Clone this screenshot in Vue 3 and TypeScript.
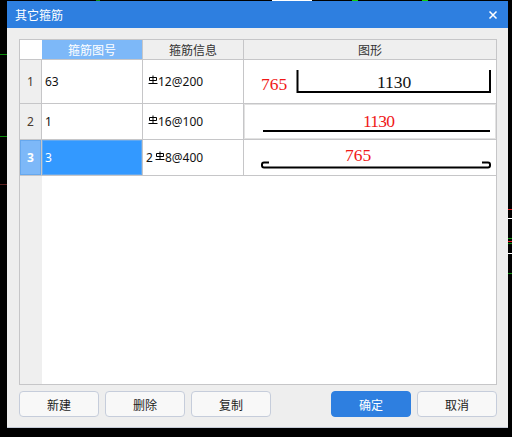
<script setup lang="ts">
interface Row {
  index: number
  no: string
  prefix: string
  info: string
  height: number
  selected: boolean
}

const rows: Row[] = [
  { index: 1, no: '63', prefix: '', info: '12@200', height: 44, selected: false },
  { index: 2, no: '1', prefix: '', info: '16@100', height: 36, selected: false },
  { index: 3, no: '3', prefix: '2', info: '8@400', height: 36, selected: true },
]

const specks = [
  { left: 0, top: 54, width: 7, color: '#0a8a0a' },
  { left: 0, top: 136, width: 7, color: '#0a8a0a' },
  { left: 0, top: 184, width: 7, color: '#5a2020' },
  { left: 508, top: 209, width: 4, color: '#e02020' },
  { left: 508, top: 218, width: 4, color: '#ffffff' },
  { left: 508, top: 238, width: 4, color: '#109010' },
  { left: 508, top: 241, width: 4, color: '#e02020' },
  { left: 508, top: 243, width: 4, color: '#109010' },
  { left: 508, top: 253, width: 4, color: '#ffffff' },
  { left: 508, top: 273, width: 4, color: '#109010' },
  { left: 96, top: 0, width: 4, color: '#109010' },
  { left: 272, top: 0, width: 40, color: '#ffffff' },
  { left: 352, top: 0, width: 6, color: '#10d010' },
  { left: 422, top: 0, width: 6, color: '#10d010' },
]
</script>

<template>
  <div class="screen">
    <i
      v-for="(s, i) in specks"
      :key="i"
      class="speck"
      :style="{ left: s.left + 'px', top: s.top + 'px', width: s.width + 'px', background: s.color }"
    ></i>
    <section class="dialog">
      <header class="title">
        <span>其它箍筋</span>
        <svg class="close" width="10" height="10" viewBox="0 0 10 10">
          <path d="M1.5 1.5 8.5 8.5M8.5 1.5 1.5 8.5" stroke="#fff" stroke-width="1.5" fill="none" />
        </svg>
      </header>
      <div class="body">
        <div class="table">
          <div class="row head">
            <div class="c-idx corner"></div>
            <div class="c-no head-active">箍筋图号</div>
            <div class="c-info head-cell">箍筋信息</div>
            <div class="c-draw head-cell">图形</div>
          </div>
          <div
            v-for="r in rows"
            :key="r.index"
            class="row"
            :class="{ selected: r.selected }"
            :style="{ height: r.height + 'px' }"
          >
            <div class="c-idx idx">{{ r.index }}</div>
            <div class="c-no no">{{ r.no }}</div>
            <div class="c-info info">
              <span v-if="r.prefix" class="prefix">{{ r.prefix }}</span>
              <svg class="bar" width="10" height="10" viewBox="0 0 10 10">
                <path d="M5 .5V8.5M1.5 2.5H8.5V5.5H1.5ZM.5 8.5H9.5" stroke="#000" stroke-width="1" fill="none" />
              </svg>
              <span class="info-text">{{ r.info }}</span>
            </div>
            <div class="c-draw draw" :class="{ framed: r.index === 2 }">
              <svg v-if="r.index === 1" width="252" height="43" viewBox="0 0 252 43">
                <text x="17" y="30" class="dim red">765</text>
                <path d="M53.5 10V32H246V10" class="rebar" />
                <text x="133" y="28" class="dim">1130</text>
              </svg>
              <svg v-else-if="r.index === 2" width="250" height="33" viewBox="0 0 250 33">
                <text x="118" y="22" class="dim red narrow">1130</text>
                <path d="M18 26H245" class="rebar" />
              </svg>
              <svg v-else width="252" height="35" viewBox="0 0 252 35">
                <text x="101" y="21" class="dim red">765</text>
                <path d="M25 22.5H20Q18 22.5 18 24.5V25.5Q18 27.5 20 27.5H244Q246 27.5 246 25.5V24.5Q246 22.5 244 22.5H238" class="rebar" />
              </svg>
            </div>
          </div>
          <div class="filler">
            <div class="c-idx"></div>
          </div>
        </div>
        <footer class="actions">
          <div class="group">
            <button class="btn" type="button">新建</button>
            <button class="btn" type="button">删除</button>
            <button class="btn" type="button">复制</button>
          </div>
          <div class="group">
            <button class="btn primary" type="button">确定</button>
            <button class="btn" type="button">取消</button>
          </div>
        </footer>
      </div>
    </section>
  </div>
</template>

<style>
html,
body {
  margin: 0;
  background: #000;
}
</style>

<style scoped>
.screen {
  position: relative;
  width: 512px;
  height: 437px;
  overflow: hidden;
  background: #000;
  padding: 1px 4px 9px 7px;
  box-sizing: border-box;
  font-family: "Noto Sans CJK SC", "Noto Sans", sans-serif;
  font-size: 12px;
  color: #222;
}
.speck {
  position: absolute;
  height: 1px;
}
.dialog {
  width: 501px;
  height: 427px;
  display: flex;
  flex-direction: column;
  background: #eeeeee;
  box-sizing: border-box;
  border-bottom: 1px solid #c4cad6;
}
.title {
  height: 27px;
  flex: none;
  background: #2e7fe0;
  color: #fff;
  display: flex;
  align-items: center;
  justify-content: space-between;
  padding: 0 10px 0 8px;
  font-size: 12px;
}
.close {
  margin-top: 1px;
}
.body {
  flex: 1;
  display: flex;
  flex-direction: column;
  padding: 11px 11px 10px 12px;
  min-height: 0;
}
.table {
  flex: 1;
  display: flex;
  flex-direction: column;
  background: #fff;
  border: 1px solid #c6c6c8;
  min-height: 0;
}
.row {
  display: grid;
  grid-template-columns: 22px 101px 101px 1fr;
  flex: none;
  box-sizing: border-box;
  border-bottom: 1px solid #c6c6c8;
}
.head {
  height: 20px;
  text-align: center;
  line-height: 19px;
  color: #333;
}
.corner {
  background: #fff;
}
.c-idx {
  box-sizing: border-box;
  border-right: 1px solid #c6c6c8;
  background: #efefef;
}
.head .corner {
  background: #fff;
  border-right: none;
}
.head-active {
  background: #7db8f8;
  color: #fff;
  border-right: 1px solid #c6c6c8;
}
.head-cell {
  background: #efefef;
  border-right: 1px solid #c6c6c8;
}
.head-cell:last-child {
  border-right: none;
}
.idx {
  display: flex;
  align-items: center;
  justify-content: center;
  color: #4a3a30;
  font-family: "Noto Sans", sans-serif;
  font-size: 12px;
}
.no {
  display: flex;
  align-items: center;
  padding-left: 3px;
  border-right: 1px solid #c6c6c8;
  color: #111;
  font-family: "Noto Sans", sans-serif;
}
.info {
  display: flex;
  align-items: center;
  padding-left: 5px;
  border-right: 1px solid #c6c6c8;
  color: #111;
  font-family: "Noto Sans", sans-serif;
}
.prefix {
  margin-left: -2px;
  margin-right: 2px;
}
.bar {
  margin-top: -3px;
  flex: none;
}
.draw {
  overflow: hidden;
  min-width: 0;
}
.draw svg {
  display: block;
}
.framed {
  box-sizing: border-box;
  border: 1px solid #e2e2e2;
}
.selected .idx {
  background: #7db8f8;
  color: #fff;
  font-weight: 700;
  box-shadow: inset 0 0 0 1px #66a8ee;
}
.selected .no {
  background: #3399ff;
  color: #fff;
  box-shadow: inset 0 0 0 1px #62a8f0;
}
.dim {
  font-family: "Liberation Serif", serif;
  font-size: 17.5px;
  fill: #111;
}
.narrow {
  letter-spacing: -0.8px;
}
.red {
  fill: #f01818;
}
.rebar {
  fill: none;
  stroke: #000;
  stroke-width: 2;
}
.filler {
  flex: 1;
  display: flex;
  min-height: 0;
}
.filler .c-idx {
  width: 22px;
  border-right: none;
}
.actions {
  display: flex;
  justify-content: space-between;
  margin-top: 6px;
  flex: none;
}
.group {
  display: flex;
  gap: 6px;
}
.btn {
  width: 80px;
  height: 26px;
  padding: 0;
  box-sizing: border-box;
  border: 1px solid #c6cddb;
  border-radius: 4px;
  background: #f8f8f8;
  color: #222;
  font: inherit;
  font-size: 12px;
}
.primary {
  background: #2e7fe0;
  border-color: #2e7fe0;
  color: #fff;
}
</style>
